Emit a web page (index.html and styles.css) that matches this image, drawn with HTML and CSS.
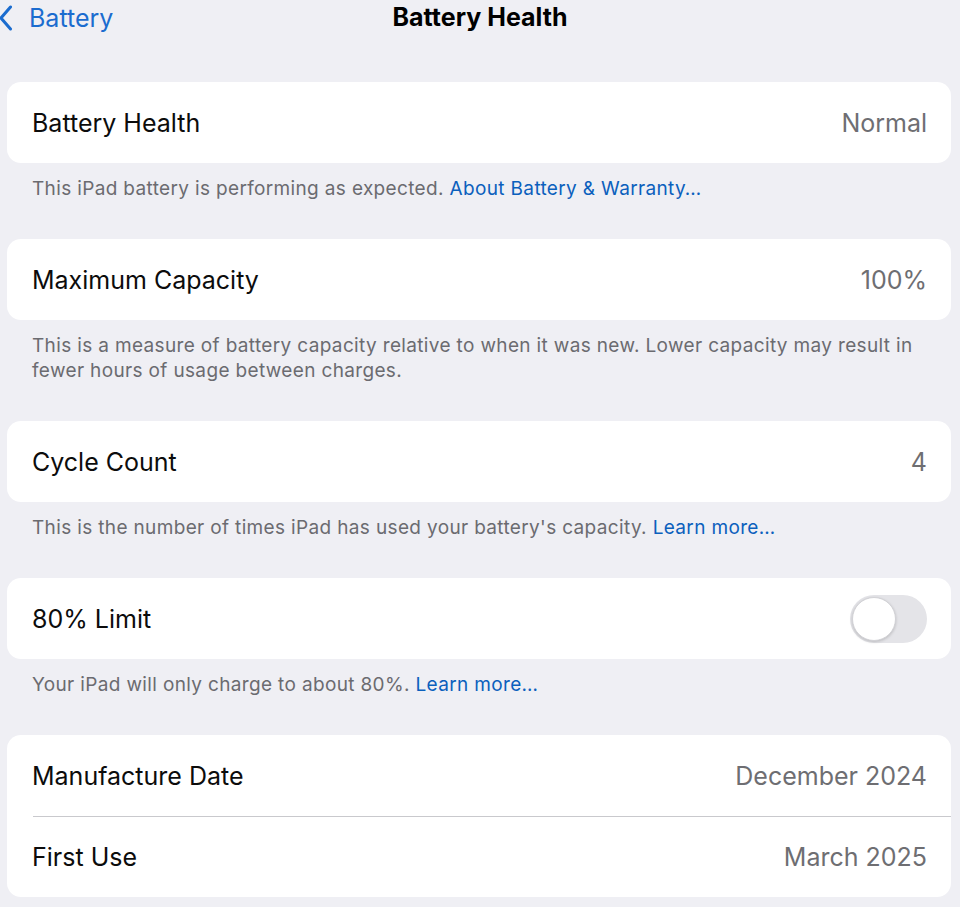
FILE: index.html
```html
<!DOCTYPE html>
<html lang="en">
<head>
<meta charset="utf-8">
<title>Battery Health</title>
<link rel="stylesheet" href="styles.css">
</head>
<body>
<header class="nav">
  <a class="back" href="#">
    <svg class="chev" width="14" height="26" viewBox="0 0 14 26" aria-hidden="true"><path d="M11.5 2 L2 13 L11.5 24" fill="none" stroke="currentColor" stroke-width="3" stroke-linecap="round" stroke-linejoin="round"/></svg>
    <span>Battery</span>
  </a>
  <h1 class="title">Battery Health</h1>
</header>

<main class="list">
  <section class="group">
    <div class="card">
      <div class="row"><span class="label">Battery Health</span><span class="value">Normal</span></div>
    </div>
    <p class="foot">This iPad battery is performing as expected. <a class="link" href="#">About Battery &amp; Warranty…</a></p>
  </section>

  <section class="group">
    <div class="card">
      <div class="row"><span class="label">Maximum Capacity</span><span class="value">100%</span></div>
    </div>
    <p class="foot">This is a measure of battery capacity relative to when it was new. Lower capacity may result in fewer hours of usage between charges.</p>
  </section>

  <section class="group">
    <div class="card">
      <div class="row"><span class="label">Cycle Count</span><span class="value">4</span></div>
    </div>
    <p class="foot">This is the number of times iPad has used your battery's capacity. <a class="link" href="#">Learn more…</a></p>
  </section>

  <section class="group">
    <div class="card">
      <div class="row"><span class="label">80% Limit</span><span class="toggle"><span class="knob"></span></span></div>
    </div>
    <p class="foot">Your iPad will only charge to about 80%. <a class="link" href="#">Learn more…</a></p>
  </section>

  <section class="group">
    <div class="card">
      <div class="row"><span class="label">Manufacture Date</span><span class="value">December 2024</span></div>
      <div class="row divided"><span class="label">First Use</span><span class="value">March 2025</span></div>
    </div>
  </section>
</main>
</body>
</html>
```

FILE: styles.css
```css
* { box-sizing: border-box; }

html, body {
  margin: 0;
  padding: 0;
  background: #efeff4;
  font-family: Inter, "Noto Sans", "Liberation Sans", sans-serif;
  color: #111;
}

body {
  width: 960px;
  height: 907px;
  overflow: hidden;
}

.nav {
  position: relative;
  height: 36px;
  margin-bottom: 46px;
}

.back {
  position: absolute;
  left: 0;
  top: 4px;
  display: flex;
  align-items: center;
  gap: 16px;
  color: #1b6ccf;
  text-decoration: none;
  font-size: 25px;
  line-height: 28px;
}

.chev { display: block; margin-left: -1px; }

.title {
  margin: 0;
  text-align: center;
  font-size: 25px;
  font-weight: 700;
  line-height: 34px;
  color: #000;
}

.list {
  margin-left: 7px;
  width: 944px;
}

.group {
  margin-bottom: 38px;
}

.card {
  background: #fff;
  border-radius: 14px;
  overflow: hidden;
}

.row {
  height: 81px;
  display: flex;
  align-items: center;
  justify-content: space-between;
  padding: 0 24px 0 25px;
}

.row.divided {
  position: relative;
}

.row.divided::before {
  content: "";
  position: absolute;
  left: 26px;
  right: 0;
  top: 0;
  border-top: 1px solid #c9c9cd;
}

.label {
  font-size: 25px;
  color: #0c0c0c;
}

.value {
  font-size: 25px;
  color: #6e6e72;
}

.foot {
  margin: 0;
  padding: 13px 24px 0 25px;
  font-size: 19px;
  letter-spacing: 0.35px;
  line-height: 25px;
  color: #6b6b70;
}

.link {
  color: #0b60bd;
  text-decoration: none;
}

.toggle {
  width: 77px;
  height: 48px;
  border-radius: 24px;
  background: #e4e4e8;
  display: flex;
  align-items: center;
  padding: 0 2px;
}

.knob {
  width: 44px;
  height: 44px;
  border-radius: 50%;
  background: #fff;
  border: 1px solid #d2d2d6;
  box-shadow: 0 1px 3px rgba(0,0,0,0.18);
}
```
